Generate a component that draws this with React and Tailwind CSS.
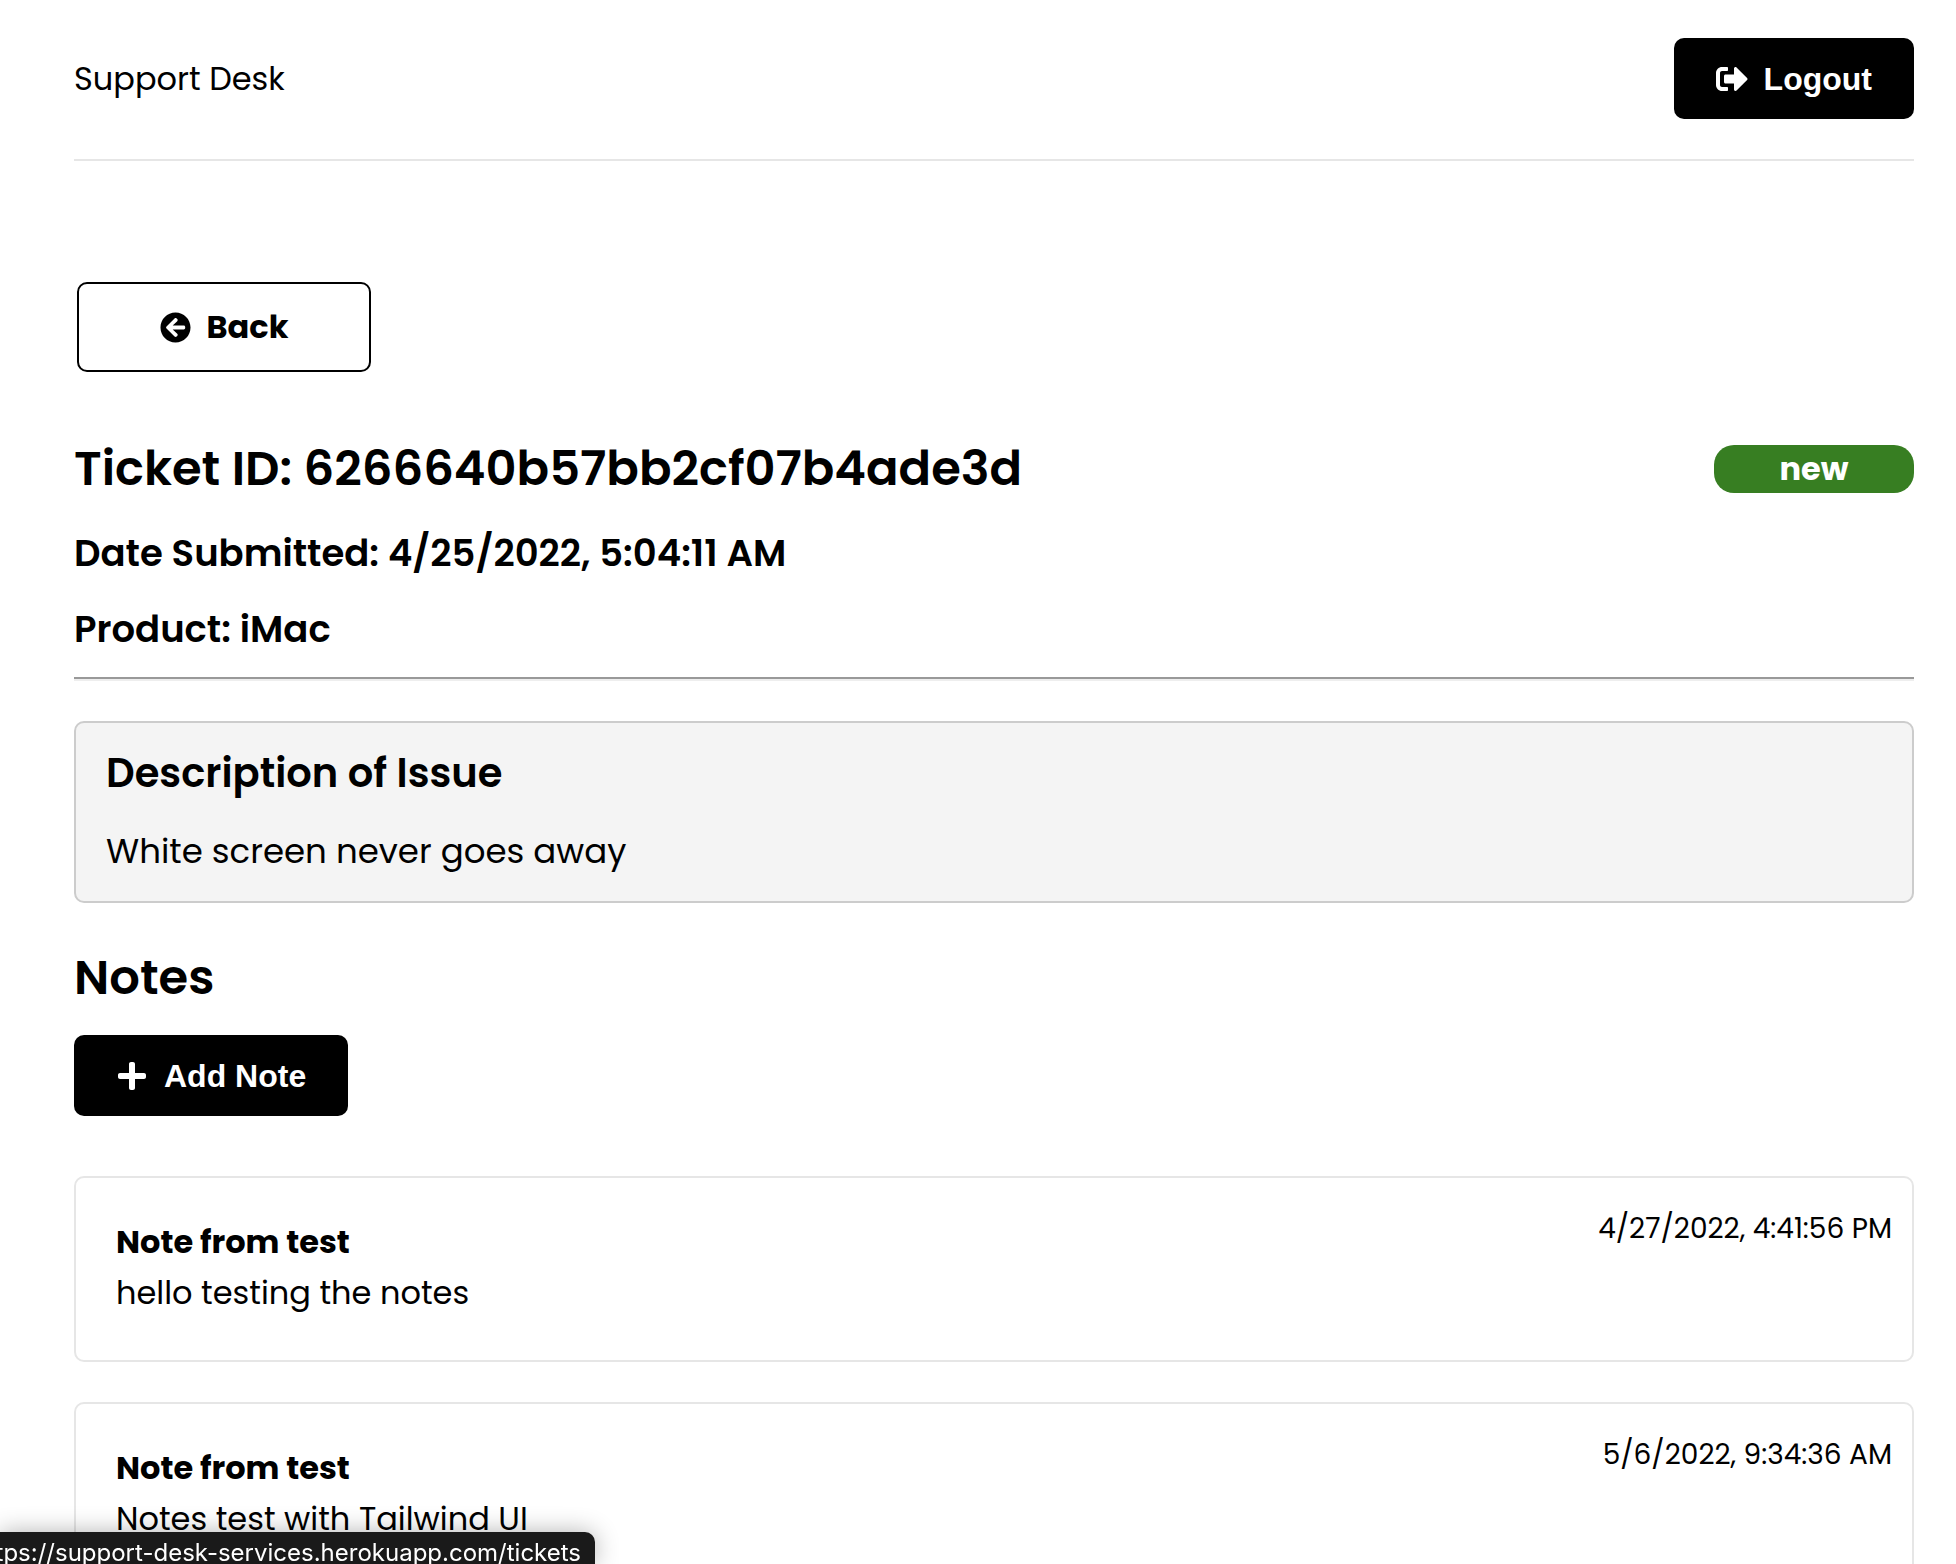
import { FaArrowCircleLeft, FaPlus, FaSignOutAlt } from "react-icons/fa";

const notes = [
  { id: 1, author: "test", text: "hello testing the notes", date: "4/27/2022, 4:41:56 PM" },
  { id: 2, author: "test", text: "Notes test with Tailwind UI", date: "5/6/2022, 9:34:36 AM" },
];

function Header() {
  return (
    <header className="flex items-center justify-between border-b-2 border-[#e6e6e6] pt-[38px] pb-10">
      <a href="#home" className="text-[32px] leading-[50px]">Support Desk</a>
      <button
        type="button"
        className="flex h-[81px] items-center gap-4 rounded-[10px] bg-black px-[42px] font-['Liberation_Sans',sans-serif] text-[32px] font-bold text-white"
      >
        <FaSignOutAlt />
        Logout
      </button>
    </header>
  );
}

function Note({ note }) {
  return (
    <article className="flex h-[186px] items-start justify-between rounded-[10px] border-2 border-[#e6e6e6] pt-[30px] pr-5 pl-10">
      <div className="pt-2 text-[32px] leading-[51px]">
        <h4 className="font-bold">Note from {note.author}</h4>
        <p>{note.text}</p>
      </div>
      <time className="text-[28px] leading-[42px]">{note.date}</time>
    </article>
  );
}

export default function App() {
  return (
    <div className="h-screen overflow-hidden bg-white pr-[42px] pl-[74px] font-[Poppins,Inter,sans-serif] text-black">
      <Header />
      <main className="pt-[121px]">
        <a
          href="#tickets"
          className="ml-[3px] flex h-[90px] w-[294px] items-center justify-center gap-4 rounded-[10px] border-2 border-black text-[32px] font-bold"
        >
          <FaArrowCircleLeft className="size-[31px]" />
          Back
        </a>

        <div className="mt-[66px] flex h-[62px] items-center justify-between">
          <h2 className="text-[48px] font-semibold">Ticket ID: 6266640b57bb2cf07b4ade3d</h2>
          <span className="h-12 w-[200px] rounded-[20px] bg-[#377e22] text-center text-[32px] leading-12 font-bold text-white">
            new
          </span>
        </div>
        <h3 className="mt-6 text-[37px] leading-[58px] font-semibold">
          Date Submitted: 4/25/2022, 5:04:11 AM
        </h3>
        <h3 className="mt-[18px] text-[37px] leading-[58px] font-semibold">Product: iMac</h3>
        <hr className="mt-[19px] h-1 border-t-2 border-b-2 border-t-[#999999] border-b-[#eeeeee]" />

        <section className="mt-10 rounded-[10px] border-2 border-[#cccccc] bg-[#f4f4f4] px-[30px] pt-5 pb-[25px]">
          <h3 className="text-[40px] leading-[60px] font-semibold">Description of Issue</h3>
          <p className="mt-[23px] text-[34px] leading-[50px]">White screen never goes away</p>
        </section>

        <h2 className="mt-[45px] text-[48px] leading-[60px] font-semibold">Notes</h2>
        <button
          type="button"
          className="mt-[27px] flex h-[81px] items-center gap-4 rounded-[10px] bg-black px-[42px] font-['Liberation_Sans',sans-serif] text-[32px] font-bold text-white"
        >
          <FaPlus />
          Add Note
        </button>

        <div className="mt-[60px] flex flex-col gap-10">
          {notes.map((note) => (
            <Note key={note.id} note={note} />
          ))}
        </div>
      </main>

      <div className="fixed bottom-0 left-0 flex h-8 w-[595px] justify-end overflow-hidden rounded-tr-[10px] bg-[#1a1a1a] pr-3.5 font-[Inter,sans-serif] text-[24px] leading-[42px] whitespace-nowrap text-white shadow-[0_0_24px_rgba(0,0,0,0.3)]">
        https://support-desk-services.herokuapp.com/tickets
      </div>
    </div>
  );
}
